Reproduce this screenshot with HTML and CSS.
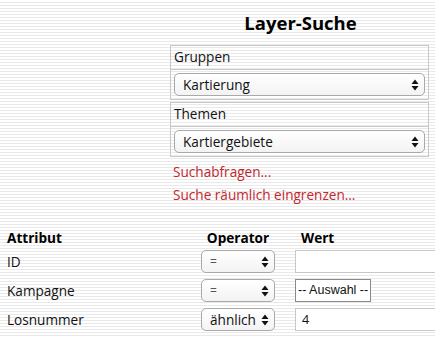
FILE: index.html
```html
<!DOCTYPE html>
<html lang="de">
<head>
<meta charset="utf-8">
<title>Layer-Suche</title>
<link rel="stylesheet" href="styles.css">
</head>
<body>
<div class="page">
  <div class="form">
    <h1 class="title">Layer-Suche</h1>
    <div class="group">
      <div class="group-label">Gruppen</div>
      <div class="group-sel">
        <div class="select wide"><span>Kartierung</span>
          <svg class="arrows" width="8" height="12" viewBox="0 0 8 12"><path d="M4 0.5L7.5 5H0.5Z M4 11.5L7.5 7H0.5Z" fill="#111"/></svg>
        </div>
      </div>
    </div>
    <div class="group">
      <div class="group-label">Themen</div>
      <div class="group-sel">
        <div class="select wide"><span>Kartiergebiete</span>
          <svg class="arrows" width="8" height="12" viewBox="0 0 8 12"><path d="M4 0.5L7.5 5H0.5Z M4 11.5L7.5 7H0.5Z" fill="#111"/></svg>
        </div>
      </div>
    </div>
    <a class="link" href="#">Suchabfragen...</a>
    <a class="link" href="#">Suche räumlich eingrenzen...</a>
  </div>

  <div class="attrs">
    <div class="head attr">Attribut</div>
    <div class="head op">Operator</div>
    <div class="head val">Wert</div>

    <div class="attr">ID</div>
    <div class="select op-sel"><span class="eq">=</span>
      <svg class="arrows" width="8" height="12" viewBox="0 0 8 12"><path d="M4 0.5L7.5 5H0.5Z M4 11.5L7.5 7H0.5Z" fill="#111"/></svg>
    </div>
    <div class="input"></div>

    <div class="attr">Kampagne</div>
    <div class="select op-sel"><span class="eq">=</span>
      <svg class="arrows" width="8" height="12" viewBox="0 0 8 12"><path d="M4 0.5L7.5 5H0.5Z M4 11.5L7.5 7H0.5Z" fill="#111"/></svg>
    </div>
    <div><span class="choice">-- Auswahl --</span></div>

    <div class="attr">Losnummer</div>
    <div class="select op-sel"><span>ähnlich</span>
      <svg class="arrows" width="8" height="12" viewBox="0 0 8 12"><path d="M4 0.5L7.5 5H0.5Z M4 11.5L7.5 7H0.5Z" fill="#111"/></svg>
    </div>
    <div class="input">4</div>
  </div>
</div>
</body>
</html>
```

FILE: styles.css
```css
html, body {
  margin: 0;
  padding: 0;
}
body {
  width: 435px;
  height: 337px;
  overflow: hidden;
  font-family: "Open Sans", "Noto Sans", sans-serif;
  font-size: 13.6px;
  color: #111;
  background: repeating-linear-gradient(to bottom, #ffffff 0px, #ffffff 2px, #e9e9e9 2px, #e9e9e9 3px);
}
.page {
  padding-top: 10px;
}
.form {
  margin-left: 170px;
  width: 259px;
  display: flex;
  flex-direction: column;
}
.title {
  margin: 0 0 10px 0;
  text-align: center;
  font-size: 18.5px;
  font-weight: 700;
  line-height: 25px;
  color: #000;
  padding-left: 2px;
}
.group {
  border: 1px solid #c8c8c8;
  margin-bottom: 2px;
}
.group-label {
  height: 23px;
  line-height: 22px;
  padding-left: 3px;
  border-bottom: 1px solid #c8c8c8;
}
.group-sel {
  padding: 3px 3px 3px 3px;
}
.select {
  box-sizing: border-box;
  height: 23px;
  border: 1px solid #a9a9a9;
  border-radius: 5px;
  background: linear-gradient(to bottom, #ffffff, #f3f3f3);
  display: flex;
  align-items: center;
  justify-content: space-between;
  padding: 0 5px 0 8px;
  color: #111;
}
.arrows {
  flex: none;
}
.link {
  color: #c4262e;
  text-decoration: none;
  line-height: 23px;
  padding-left: 3px;
}
.link:first-of-type {
  margin-top: 1px;
}
.attrs {
  margin-top: 22px;
  display: grid;
  grid-template-columns: 174px 74px 1fr;
  column-gap: 20px;
  row-gap: 6px;
  padding-left: 7px;
  align-items: center;
}
.head {
  font-weight: 700;
  color: #000;
  line-height: 20px;
  margin-bottom: -4px;
}
.head.op {
  text-align: center;
}
.head.val {
  padding-left: 6px;
}
.op-sel {
  padding: 0 5px 0 8px;
}
.eq {
  color: #555;
  font-size: 12px;
}
.input {
  box-sizing: border-box;
  height: 23px;
  width: 100%;
  border: 1px solid #c8c8c8;
  border-right: none;
  background: #fff;
  line-height: 21px;
  padding-left: 6px;
  font-size: 12.5px;
}
.choice {
  display: inline-block;
  box-sizing: border-box;
  height: 23px;
  line-height: 21px;
  border: 1px solid #8a8a8a;
  background: #fff;
  padding: 0 2px 0 2px;
  font-family: "Liberation Sans", Arial, sans-serif;
  font-size: 12.5px;
}
```
